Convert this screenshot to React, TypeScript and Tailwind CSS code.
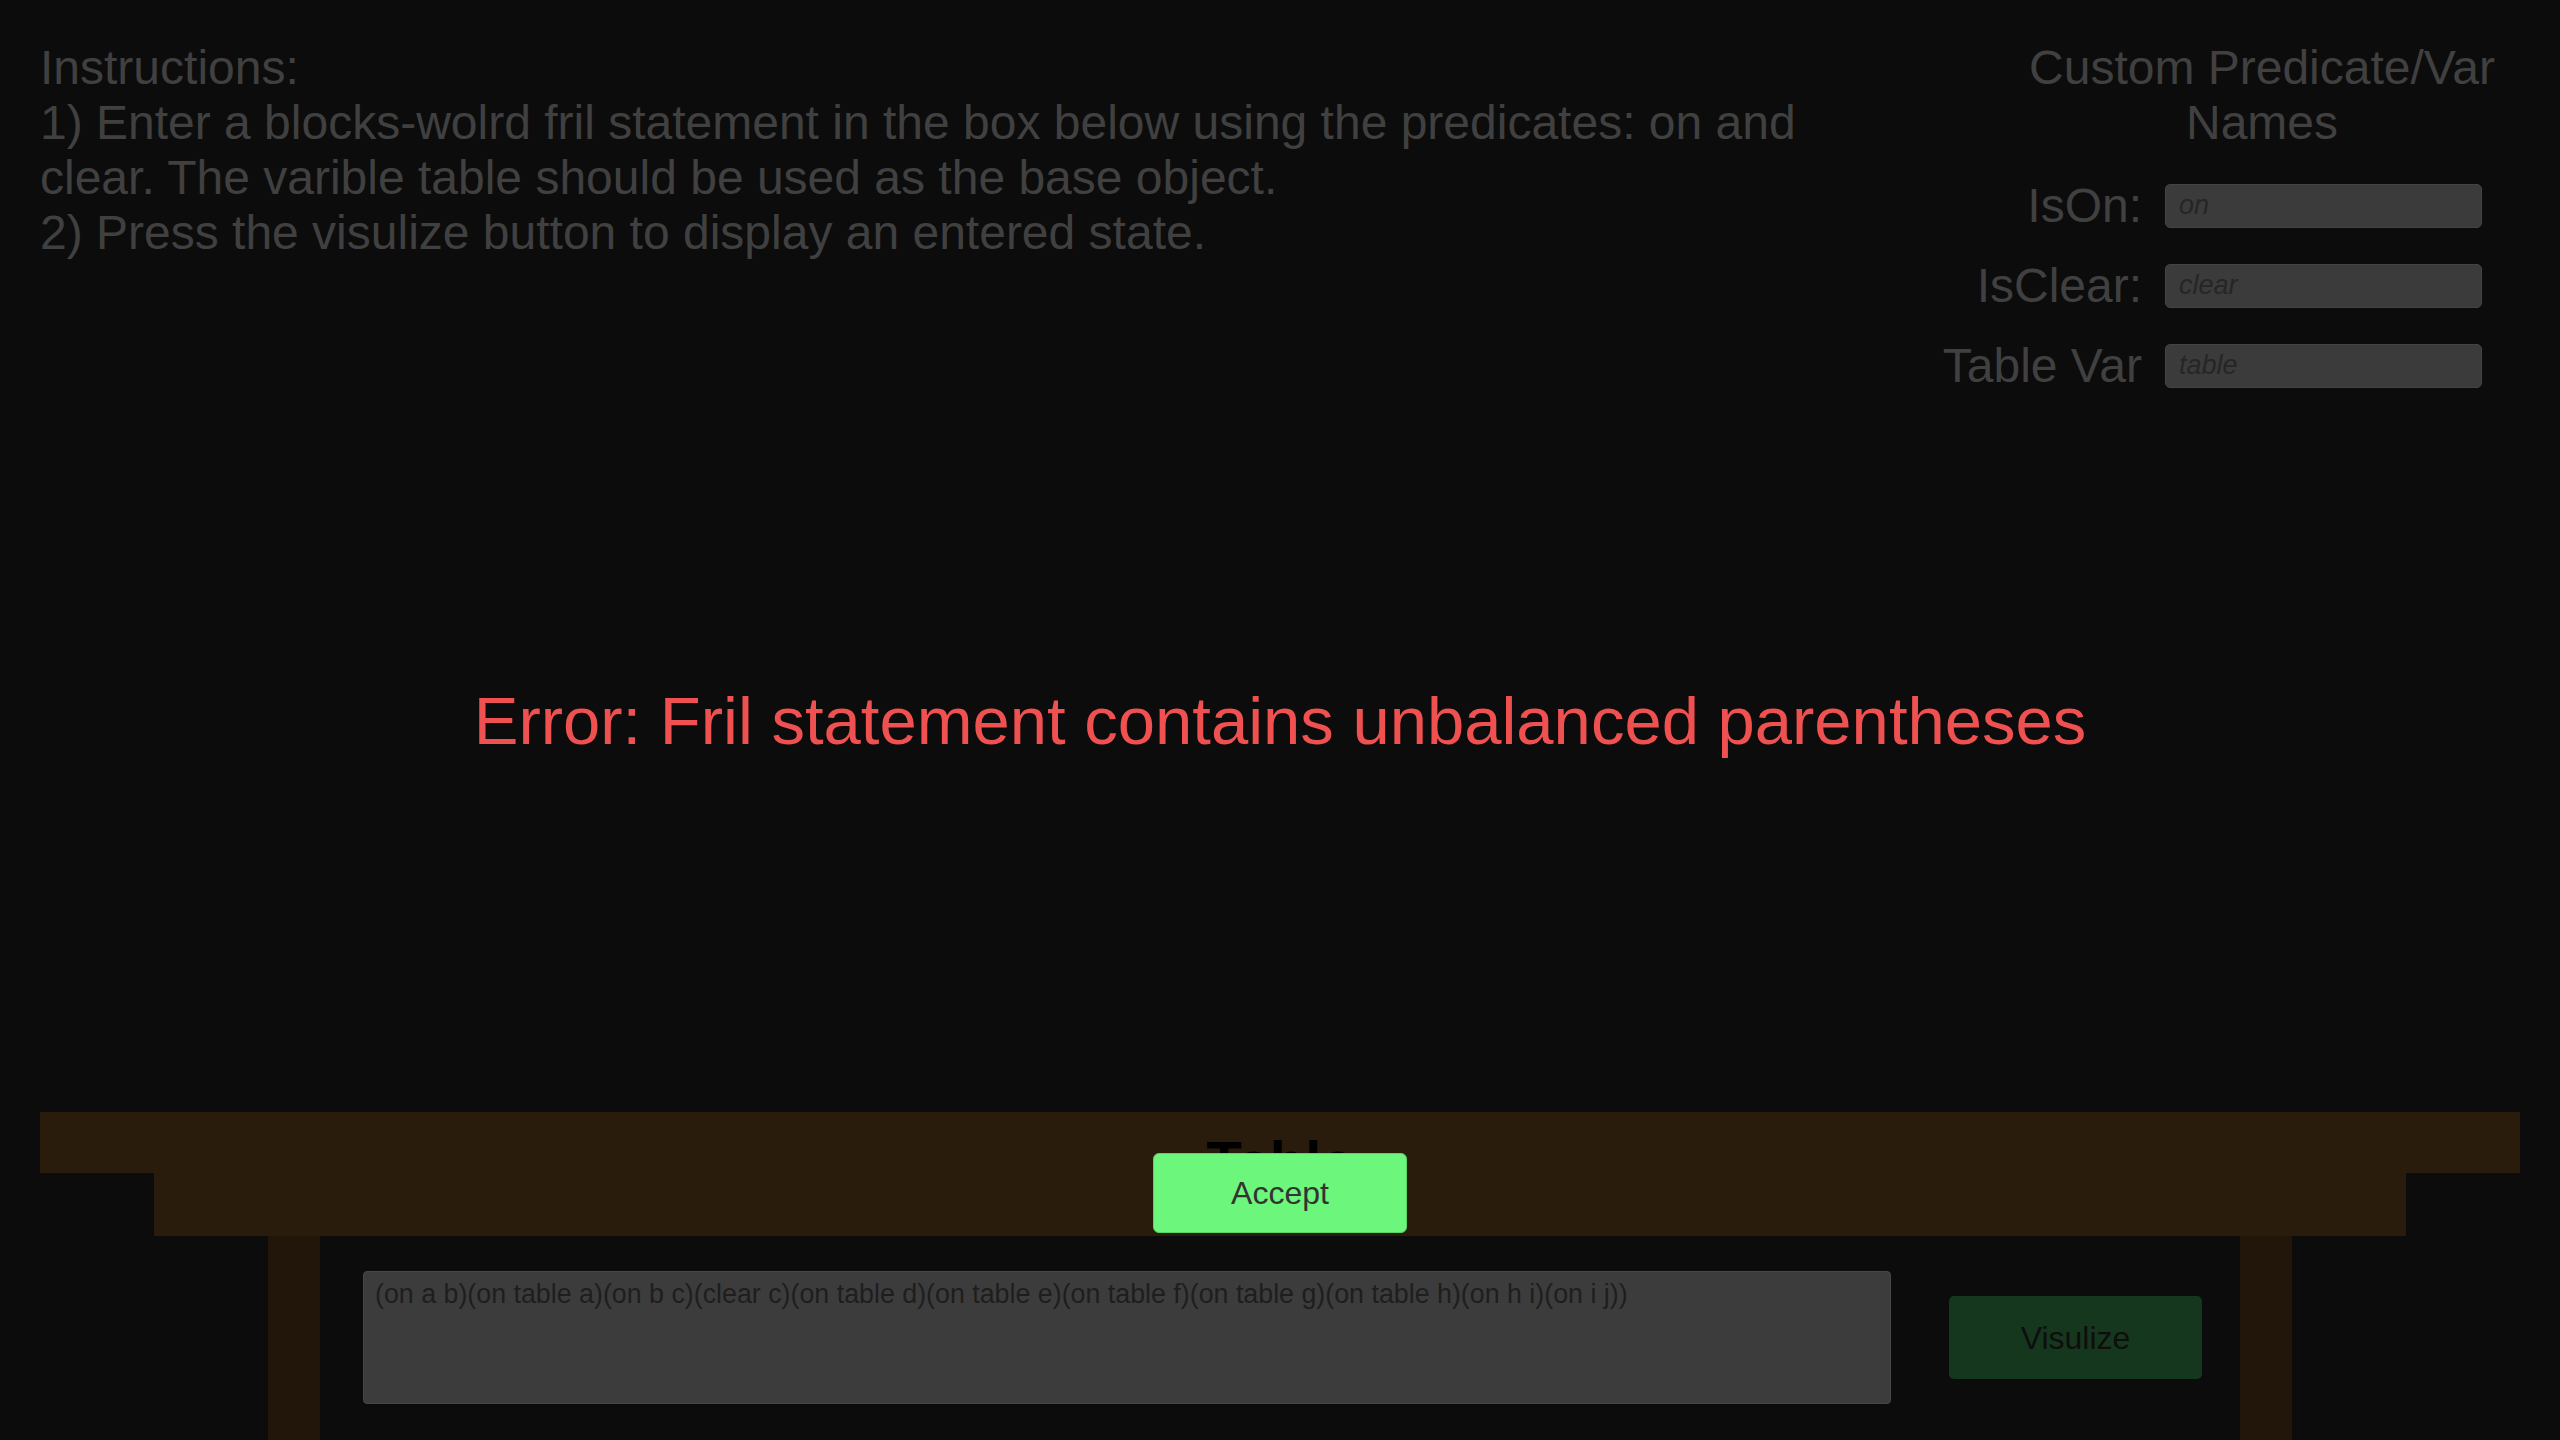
import React from 'react';

const statement =
  '(on a b)(on table a)(on b c)(clear c)(on table d)(on table e)(on table f)(on table g)(on table h)(on h i)(on i j))';

const fields = [
  { label: 'IsOn:', placeholder: 'on' },
  { label: 'IsClear:', placeholder: 'clear' },
  { label: 'Table Var', placeholder: 'table' },
];

const App: React.FC = () => {
  return (
    <div className="relative flex h-screen w-full flex-col overflow-hidden bg-[#0c0c0c] font-['Liberation_Sans',Arial,sans-serif]">
      {/* Instructions + custom names */}
      <div className="flex justify-between px-[40px] pt-[40px]">
        <div className="w-[1820px] text-[48px] leading-[55px] text-[#404040]">
          <p>Instructions:</p>
          <p>
            1) Enter a blocks-wolrd fril statement in the box below using the predicates: on and clear. The
            varible table should be used as the base object.
          </p>
          <p>2) Press the visulize button to display an entered state.</p>
        </div>

        <div className="flex w-[516px] flex-col">
          <h2 className="text-center text-[48px] leading-[55px] text-[#404040]">Custom Predicate/Var Names</h2>
          <div className="mt-[28px] flex flex-col gap-[25px]">
            {fields.map(f => (
              <div key={f.label} className="flex items-center justify-end gap-[23px] pr-[38px]">
                <span className="shrink-0 whitespace-nowrap text-[48px] leading-[55px] text-[#404040]">{f.label}</span>
                <input
                  placeholder={f.placeholder}
                  className="h-[44px] w-[317px] shrink-0 rounded-[5px] border border-[#434343] bg-[#3b3b3b] pl-[13px] text-[27px] text-[#262626] outline-none placeholder:italic placeholder:text-[#262626]"
                />
              </div>
            ))}
          </div>
        </div>
      </div>

      {/* Table */}
      <div className="mt-auto flex flex-col px-[40px]">
        <div className="h-[61px] bg-[#2a1c0c] pt-[21px] text-center text-[58px] font-bold leading-none text-black">
          Table
        </div>
        <div className="mx-[114px] h-[63px] bg-[#2a1c0c]" />
        <div className="flex h-[204px] px-[228px]">
          <div className="w-[52px] bg-[#22160a]" />
          <div className="flex flex-1 items-start pl-[43px] pt-[35px]">
            <div className="flex items-center gap-[58px]">
              <textarea
                defaultValue={statement}
                className="h-[133px] w-[1528px] resize-none rounded-[4px] border border-[#474747] bg-[#3c3c3c] px-[11px] pt-[2px] text-[26.8px] text-[#1e1e1e] outline-none"
              />
              <button className="h-[83px] w-[253px] rounded-[5px] bg-[#15371e] text-[32px] text-[#0e0e0e]">
                Visulize
              </button>
            </div>
          </div>
          <div className="w-[52px] bg-[#22160a]" />
        </div>
      </div>

      {/* Error dialog */}
      <div className="absolute inset-0 flex flex-col items-center pt-[683px]">
        <p className="text-[67px] leading-[76px] text-[#ef5050]">Error: Fril statement contains unbalanced parentheses</p>
        <button className="mt-[394px] h-[80px] w-[254px] rounded-[6px] border border-[#58d466] bg-[#6cf67c] text-[32px] text-[#333333]">
          Accept
        </button>
      </div>
    </div>
  );
};

export default App;
